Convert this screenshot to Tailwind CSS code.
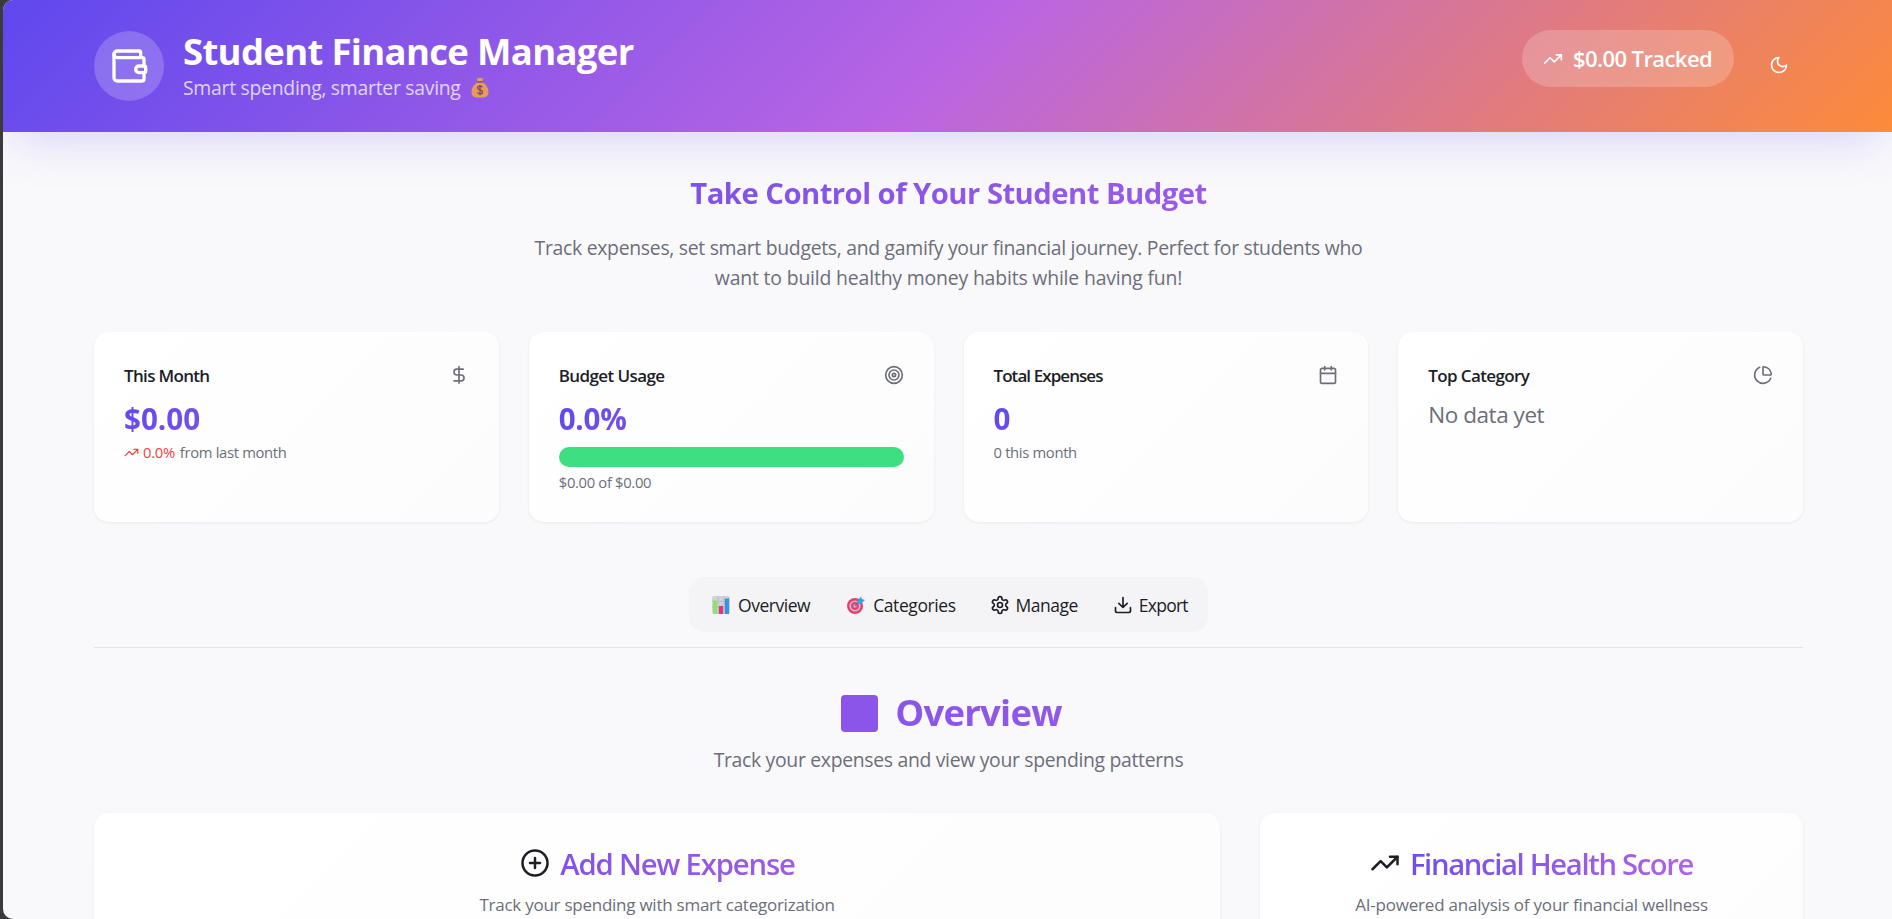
<!DOCTYPE html>
<html lang="en">
<head>
<meta charset="utf-8">
<title>Student Finance Manager</title>
<script src="https://cdn.jsdelivr.net/npm/@tailwindcss/browser@4"></script>
</head>
<body class="h-screen overflow-hidden bg-[#3b3b3d] font-['Open_Sans',sans-serif] text-[#1c1d26]">
<svg class="hidden">
  <symbol id="trend" viewBox="0 0 24 24" fill="none" stroke="currentColor" stroke-width="2" stroke-linecap="round" stroke-linejoin="round"><path d="M16 7h6v6"/><path d="m22 7-8.5 8.5-5-5L2 17"/></symbol>
</svg>
<div class="ml-[3px] h-[919px] overflow-hidden rounded-l-[10px] bg-[#f9f9fb] whitespace-nowrap">
  <header class="relative flex h-[132px] justify-between bg-[linear-gradient(135deg,#5f48ee_0%,#b965e3_50%,#fd8b38_100%)] pr-[88px] pl-[91px] text-white shadow-[0_18px_50px_-12px_rgba(96,72,238,0.23)]">
    <div class="flex items-center gap-[19px] self-start pt-[29px]">
      <div class="mt-px flex size-[70px] items-center justify-center rounded-full bg-white/20">
        <svg class="size-10" viewBox="0 0 24 24" fill="none" stroke="currentColor" stroke-width="2" stroke-linecap="round" stroke-linejoin="round"><path d="M19 7V4a1 1 0 0 0-1-1H5a2 2 0 0 0 0 4h15a1 1 0 0 1 1 1v4h-3a2 2 0 0 0 0 4h3a1 1 0 0 0 1-1v-2a1 1 0 0 0-1-1"/><path d="M3 5v14a2 2 0 0 0 2 2h15a1 1 0 0 0 1-1v-4"/></svg>
      </div>
      <div>
        <h1 class="text-[36.5px] leading-[45px] font-bold tracking-[-0.68px]">Student Finance Manager</h1>
        <p class="flex items-center text-[19.4px] leading-[27px] tracking-[-0.28px] text-white/75">Smart spending, smarter saving
          <svg class="ml-[10px] h-[21px] w-[18px]" viewBox="0 0 18 21"><path d="M6 5.5h6c3.600 2.400 5.500 6 5.500 9.300 0 3.800-2.200 5.700-5 5.700h-7c-2.800 0-5-1.900-5-5.700C.5 11.500 2.400 7.900 6 5.500z" fill="#e79c5c"/><path d="M6.500 4 5.500.8l2 .9L9 .3l1.500 1.400 2-.9L11.500 4z" fill="#e5a04e"/><rect x="6" y="4" width="6" height="1.700" rx=".8" fill="#8e5a77"/><path d="M11.400 10.300c-.5-.8-1.300-1.100-2.400-1.100-1.400 0-2.400.7-2.400 1.800 0 2.600 4.900 1.300 4.900 4 0 1.200-1.100 1.900-2.500 1.900-1.200 0-2.200-.5-2.600-1.400M9 7.800v10.500" fill="none" stroke="#7d4a68" stroke-width="1.300"/></svg>
        </p>
      </div>
    </div>
    <div class="flex items-start gap-5 pt-[30px]">
      <div class="flex h-[57px] w-[212px] items-center rounded-full bg-white/20 pl-[21px]">
        <svg class="mr-[10px] size-5"><use href="#trend"/></svg>
        <span class="text-[22px] font-semibold tracking-[-0.58px]">$0.00 Tracked</span>
      </div>
      <div class="mt-[10px] flex size-[50px] items-center justify-center">
        <svg class="size-5" viewBox="0 0 24 24" fill="none" stroke="currentColor" stroke-width="2" stroke-linecap="round" stroke-linejoin="round"><path d="M12 3a6 6 0 0 0 9 9 9 9 0 1 1-9-9Z"/></svg>
      </div>
    </div>
  </header>

  <main class="pr-[85px] pl-[91px]">
    <div class="w-[1709px]">
    <h2 class="mt-[43px] bg-[linear-gradient(135deg,#5f48ee,#b965e3)] bg-clip-text text-center text-[29.25px] leading-[37px] font-bold tracking-[-0.53px] text-transparent">Take Control of Your Student Budget</h2>
    <p class="mt-[21px] text-center text-[19.4px] leading-[30px] tracking-[-0.3px] text-[#6c6e7a]">Track expenses, set smart budgets, and gamify your financial journey. Perfect for students who<br><span class="tracking-[-0.17px]">want to build healthy money habits while having fun!</span></p>

    <section class="mt-[39px] grid grid-cols-4 gap-[30px]">
      <article class="h-[190px] rounded-[15px] bg-linear-135 from-white to-[#fcfcfd] px-[30px] pt-[30px] shadow-[0_1px_3px_rgba(30,30,60,0.07)]">
        <div class="flex items-center justify-between"><h3 class="text-[17px] leading-7 font-semibold tracking-[-0.67px]">This Month</h3>
          <svg class="mb-[2px] size-5 text-[#6c6e7a]" viewBox="0 0 24 24" fill="none" stroke="currentColor" stroke-width="2" stroke-linecap="round" stroke-linejoin="round"><path d="M12 2v20M17 5H9.500a3.500 3.500 0 0 0 0 7h5a3.500 3.500 0 0 1 0 7H6"/></svg></div>
        <p class="mt-[10px] bg-[linear-gradient(135deg,#5f48ee,#b965e3)] bg-clip-text text-[29.6px] leading-[37px] font-bold text-transparent">$0.00</p>
        <p class="mt-[5px] flex items-center text-[14.8px] leading-5 tracking-[-0.33px] text-[#6c6e7a]"><svg class="mr-1 size-[15px] text-[#ef4444]"><use href="#trend"/></svg><span class="mr-[5px] tracking-[-0.3px] text-[#ef4444]">0.0%</span>from last month</p>
      </article>
      <article class="h-[190px] rounded-[15px] bg-linear-135 from-white to-[#fcfcfd] px-[30px] pt-[30px] shadow-[0_1px_3px_rgba(30,30,60,0.07)]">
        <div class="flex items-center justify-between"><h3 class="text-[17px] leading-7 font-semibold tracking-[-0.6px]">Budget Usage</h3>
          <svg class="mb-[2px] size-5 text-[#6c6e7a]" viewBox="0 0 24 24" fill="none" stroke="currentColor" stroke-width="2"><circle cx="12" cy="12" r="10"/><circle cx="12" cy="12" r="6"/><circle cx="12" cy="12" r="2"/></svg></div>
        <p class="mt-[10px] bg-[linear-gradient(135deg,#5f48ee,#b965e3)] bg-clip-text text-[29.6px] leading-[37px] font-bold tracking-[-0.3px] text-transparent">0.0%</p>
        <div class="mt-[10px] h-5 rounded-full bg-[#3ddf80]"></div>
        <p class="mt-[5px] text-[14.8px] leading-5 tracking-[-0.33px] text-[#6c6e7a]">$0.00 of $0.00</p>
      </article>
      <article class="h-[190px] rounded-[15px] bg-linear-135 from-white to-[#fcfcfd] px-[30px] pt-[30px] shadow-[0_1px_3px_rgba(30,30,60,0.07)]">
        <div class="flex items-center justify-between"><h3 class="text-[17px] leading-7 font-semibold tracking-[-0.93px]">Total Expenses</h3>
          <svg class="mb-[2px] size-5 text-[#6c6e7a]" viewBox="0 0 24 24" fill="none" stroke="currentColor" stroke-width="2" stroke-linecap="round" stroke-linejoin="round"><path d="M8 2v4M16 2v4M3 10h18"/><rect x="3" y="4" width="18" height="18" rx="2"/></svg></div>
        <p class="mt-[10px] bg-[linear-gradient(135deg,#5f48ee,#b965e3)] bg-clip-text text-[29.6px] leading-[37px] font-bold text-transparent">0</p>
        <p class="mt-[5px] text-[14.8px] leading-5 tracking-[-0.33px] text-[#6c6e7a]">0 this month</p>
      </article>
      <article class="h-[190px] rounded-[15px] bg-linear-135 from-white to-[#fcfcfd] px-[30px] pt-[30px] shadow-[0_1px_3px_rgba(30,30,60,0.07)]">
        <div class="flex items-center justify-between"><h3 class="text-[17px] leading-7 font-semibold tracking-[-0.62px]">Top Category</h3>
          <svg class="mb-[2px] size-5 text-[#6c6e7a]" viewBox="0 0 24 24" fill="none" stroke="currentColor" stroke-width="2" stroke-linecap="round" stroke-linejoin="round"><path d="M21 12c.552 0 1.005-.449.950-.998a10 10 0 0 0-8.953-8.951c-.550-.055-.998.398-.998.950v8a1 1 0 0 0 1 1z"/><path d="M21.210 15.890A10 10 0 1 1 8 2.830"/></svg></div>
        <p class="mt-[9px] text-[22.500px] leading-[31px] tracking-[-0.45px] text-[#6c6e7a]">No data yet</p>
      </article>
    </section>

    <nav class="mx-auto mt-[55px] flex h-[55px] w-[519px] items-center rounded-[15px] bg-[#f4f4f6] pl-[23px] text-[17.5px]">
      <div class="flex items-center">
        <svg class="mr-2 size-[18px]" viewBox="0 0 18 18"><rect width="18" height="18" rx="2" fill="#d3cfdc"/><path d="M0 5.500h18M0 11h18M6 0v18M12 0v18" stroke="#bdb8ca" stroke-width=".8"/><rect x="1" y="4.500" width="4.200" height="13.500" fill="#8ee36b"/><rect x="6.900" y="10" width="4.200" height="8" fill="#e5337b"/><rect x="12.800" y="2.500" width="4.200" height="15.500" fill="#3296e3"/></svg>
        <span class="pt-px tracking-[-0.46px]">Overview</span>
      </div>
      <div class="ml-[37px] flex items-center">
        <svg class="mr-2 size-[18px]" viewBox="0 0 18 18"><circle cx="8" cy="10" r="8" fill="#e0426f"/><circle cx="8" cy="10" r="5.600" fill="#d9b9c9"/><circle cx="8" cy="10" r="3.900" fill="#e0426f"/><circle cx="8" cy="10" r="1.700" fill="#d9b9c9"/><path d="m8 10 5-5" stroke="#76628c" stroke-width="1.200"/><path d="m10.500 5 3.500-4.500 1 2.500 3 1-4.500 4-3-.5z" fill="#3b9fe6"/></svg>
        <span class="pt-px tracking-[-0.42px]">Categories</span>
      </div>
      <div class="ml-[34px] flex items-center">
        <svg class="mr-[6px] size-5" viewBox="0 0 24 24" fill="none" stroke="currentColor" stroke-width="2" stroke-linecap="round" stroke-linejoin="round"><path d="M12.220 2h-.440a2 2 0 0 0-2 2v.180a2 2 0 0 1-1 1.730l-.430.250a2 2 0 0 1-2 0l-.150-.080a2 2 0 0 0-2.730.730l-.220.380a2 2 0 0 0 .730 2.730l.150.100a2 2 0 0 1 1 1.720v.510a2 2 0 0 1-1 1.740l-.150.090a2 2 0 0 0-.730 2.730l.220.380a2 2 0 0 0 2.730.730l.150-.080a2 2 0 0 1 2 0l.430.250a2 2 0 0 1 1 1.730V20a2 2 0 0 0 2 2h.440a2 2 0 0 0 2-2v-.180a2 2 0 0 1 1-1.730l.430-.250a2 2 0 0 1 2 0l.150.080a2 2 0 0 0 2.730-.730l.220-.390a2 2 0 0 0-.730-2.730l-.150-.080a2 2 0 0 1-1-1.740v-.500a2 2 0 0 1 1-1.740l.150-.090a2 2 0 0 0 .730-2.730l-.220-.380a2 2 0 0 0-2.730-.730l-.150.080a2 2 0 0 1-2 0l-.430-.250a2 2 0 0 1-1-1.730V4a2 2 0 0 0-2-2z"/><circle cx="12" cy="12" r="3"/></svg>
        <span class="pt-px tracking-[-0.5px]">Manage</span>
      </div>
      <div class="ml-[35px] flex items-center">
        <svg class="mr-[6px] size-5" viewBox="0 0 24 24" fill="none" stroke="currentColor" stroke-width="2" stroke-linecap="round" stroke-linejoin="round"><path d="M12 15V3M21 15v4a2 2 0 0 1-2 2H5a2 2 0 0 1-2-2v-4M7 10l5 5 5-5"/></svg>
        <span class="pt-px tracking-[-0.75px]">Export</span>
      </div>
    </nav>
    <hr class="mt-[15px] border-[#e2e3e8]">

    <h2 class="mt-[42px] flex items-center justify-center bg-[linear-gradient(135deg,#5f48ee,#b965e3)] bg-clip-text pl-[6px] text-[36.5px] leading-[45px] font-bold tracking-[-0.75px] text-transparent"><span class="mt-px mr-[17px] size-[37px] rounded bg-[#8a55e8]"></span>Overview</h2>
    <p class="mt-[10px] text-center text-[19.4px] leading-[30px] tracking-[-0.32px] text-[#6c6e7a]">Track your expenses and view your spending patterns</p>

    <section class="mt-[38px] flex gap-10">
      <article class="h-[600px] w-[1126px] rounded-[15px] bg-linear-135 from-white to-[#fcfcfd] pt-[31px] shadow-[0_1px_3px_rgba(30,30,60,0.07)]">
        <h3 class="flex items-center justify-center pl-[2px] text-[29.25px] leading-10 font-semibold tracking-[-1.16px]">
          <svg class="mr-[10px] mb-[2px] size-[30px]" viewBox="0 0 24 24" fill="none" stroke="currentColor" stroke-width="2" stroke-linecap="round"><circle cx="12" cy="12" r="10"/><path d="M8 12h8M12 8v8"/></svg>
          <span class="bg-linear-to-r from-[#8452e8] to-[#9c5ce5] bg-clip-text pr-px text-transparent">Add New Expense</span></h3>
        <p class="mt-2 text-center text-[17px] leading-[26px] tracking-[-0.25px] text-[#6c6e7a]">Track your spending with smart categorization</p>
      </article>
      <article class="h-[600px] w-[543px] rounded-[15px] bg-linear-135 from-white to-[#fcfcfd] pt-[31px] shadow-[0_1px_3px_rgba(30,30,60,0.07)]">
        <h3 class="flex items-center justify-center pl-px text-[29.25px] leading-10 font-semibold tracking-[-1.35px]">
          <svg class="mr-[10px] mb-[2px] size-[30px]"><use href="#trend"/></svg>
          <span class="bg-linear-to-r from-[#714dec] to-[#b063e4] bg-clip-text pr-px text-transparent">Financial Health Score</span></h3>
        <p class="mt-2 text-center text-[17px] leading-[26px] tracking-[-0.2px] text-[#6c6e7a]">AI-powered analysis of your financial wellness</p>
      </article>
    </section>
    </div>
  </main>
</div>
</body>
</html>
